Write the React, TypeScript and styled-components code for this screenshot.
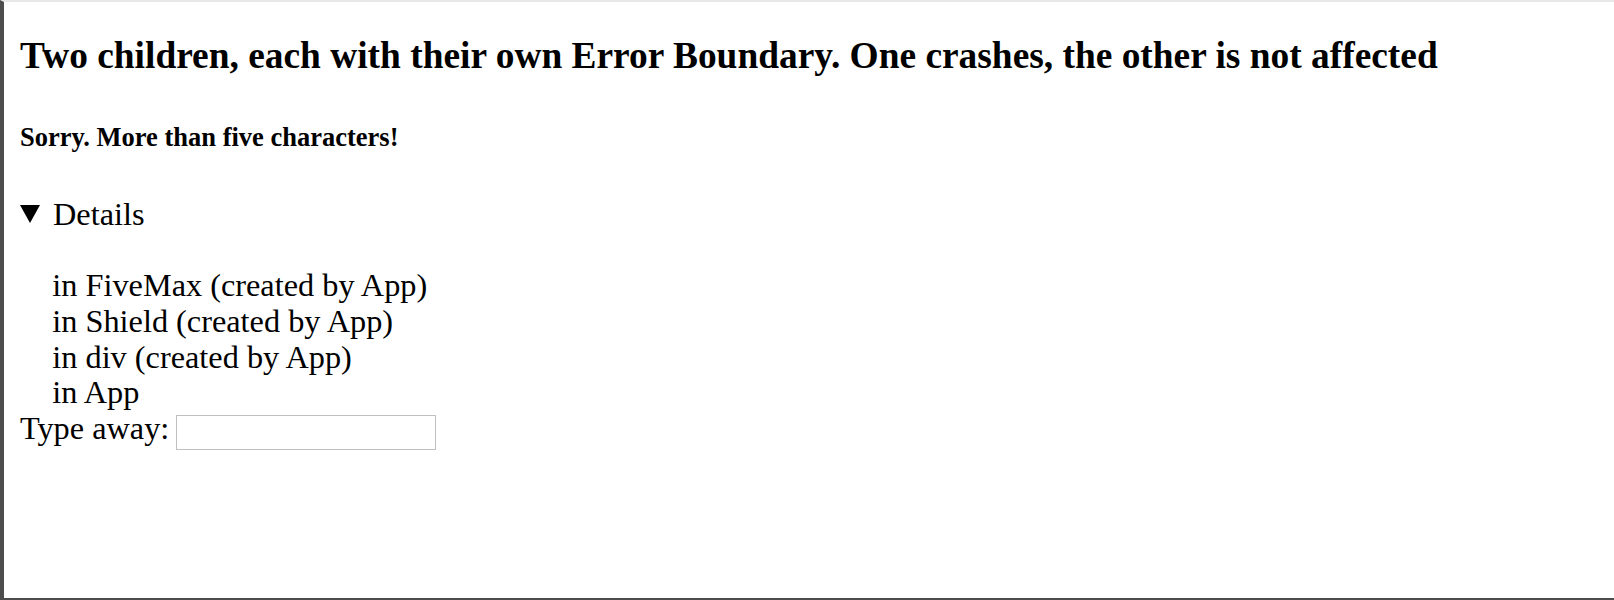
import React from "react";
import styled, { createGlobalStyle } from "styled-components";

const GlobalStyle = createGlobalStyle`
  html, body {
    margin: 0;
    padding: 0;
    background: #ffffff;
  }
  body {
    font-family: "Liberation Serif", "Times New Roman", serif;
    color: #000;
  }
`;

const Frame = styled.div`
  box-sizing: border-box;
  height: 600px;
  border-left: 4px solid #4d4d4d;
  border-top: 2px solid #e8e8e8;
  border-bottom: 2px solid #4d4d4d;
  padding: 0 0 0 16px;
  overflow: hidden;
`;

const Title = styled.h2`
  margin: 31px 0 0;
  font-size: 37.4px;
  line-height: 46px;
  font-weight: bold;
`;

const ErrorTitle = styled.h4`
  margin: 43px 0 0;
  font-size: 26.5px;
  line-height: 31px;
  font-weight: bold;
`;

const Details = styled.details`
  margin-top: 44px;
  font-size: 32.3px;
  line-height: 35.65px;
  white-space: pre-wrap;
`;

const Summary = styled.summary`
  display: flex;
  align-items: center;
  gap: 13px;
  list-style: none;
  cursor: pointer;
  &::-webkit-details-marker {
    display: none;
  }
`;

const Marker = styled.span`
  width: 0;
  height: 0;
  border-left: 10px solid transparent;
  border-right: 10px solid transparent;
  border-top: 18px solid #000;
  margin-top: -1px;
`;

const Stack = styled.div`
  padding-top: 35.65px;
`;

const StackLine = styled.div`
  white-space: pre;
`;

const Row = styled.div`
  display: flex;
  align-items: flex-start;
  gap: 7px;
  font-size: 32.3px;
  line-height: 35.65px;
`;

const Label = styled.label`
  white-space: nowrap;
`;

const TextInput = styled.input`
  box-sizing: border-box;
  width: 260px;
  height: 35px;
  margin-top: 4px;
  border: 1px solid #c0c0c0;
  padding: 2px 4px;
  font-size: 20px;
  font-family: "Liberation Sans", Arial, sans-serif;
  outline: none;
`;

const stack = [
  "in FiveMax (created by App)",
  "in Shield (created by App)",
  "in div (created by App)",
  "in App",
];

export default function App() {
  return (
    <>
      <GlobalStyle />
      <Frame>
        <Title>
          Two children, each with their own Error Boundary. One crashes, the
          other is not affected
        </Title>
        <ErrorTitle>Sorry. More than five characters!</ErrorTitle>
        <Details open>
          <Summary>
            <Marker />
            <span>Details</span>
          </Summary>
          <Stack>
            {stack.map((line) => (
              <StackLine key={line}>{"    " + line}</StackLine>
            ))}
          </Stack>
        </Details>
        <Row>
          <Label htmlFor="type-away">Type away:</Label>
          <TextInput id="type-away" type="text" />
        </Row>
      </Frame>
    </>
  );
}
